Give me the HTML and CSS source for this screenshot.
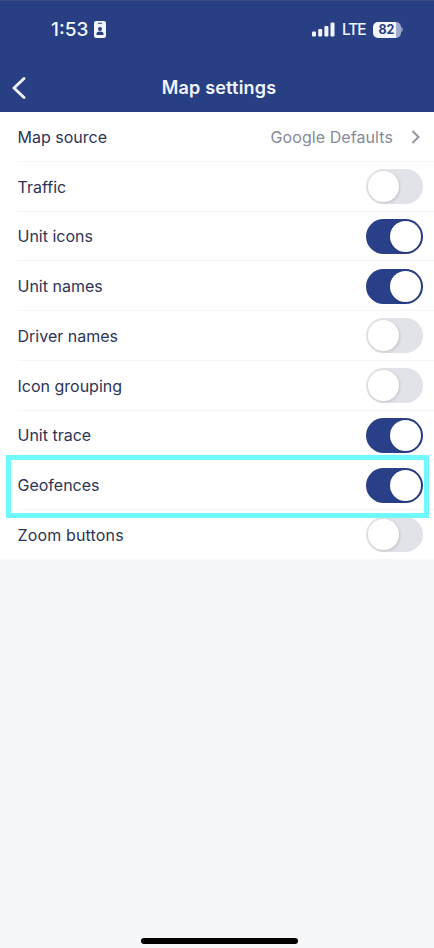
FILE: index.html
```
<!DOCTYPE html>
<html lang="en">
<head>
<meta charset="utf-8">
<title>Map settings</title>
<link rel="stylesheet" href="styles.css">
</head>
<body>
<div class="screen">
  <header class="header">
    <div class="status">
      <span class="time">1:53</span>
      <svg class="badge" width="12" height="17" viewBox="0 0 12 17"><rect width="12" height="17" rx="2.2" fill="#f2f5ff"/><rect x="3.8" y="1.8" width="4.4" height="1" rx=".5" fill="#293f83"/><circle cx="6" cy="8" r="2" fill="#293f83"/><path d="M2.5 14v-1.2c0-1.500 1.500-2.200 3.500-2.200s3.500.7 3.500 2.200V14z" fill="#293f83"/></svg>
      <svg class="signal" width="23" height="15" viewBox="0 0 23 15" fill="#f2f5ff"><rect x="0" y="9.500" width="4" height="5" rx="1"/><rect x="6.200" y="7" width="4" height="7.500" rx="1"/><rect x="12.400" y="4" width="4" height="10.500" rx="1"/><rect x="18.500" y="0.500" width="4" height="14" rx="1"/></svg>
      <span class="network">LTE</span>
      <span class="battery"><span class="level">82</span></span>
      <span class="tip"></span>
    </div>
    <div class="nav">
      <svg class="back" width="16" height="24" viewBox="0 0 16 24" fill="none" stroke="#f4f6ff" stroke-width="2.900" stroke-linecap="round" stroke-linejoin="round"><path d="M14 2.500 4 12 14 21.500"/></svg>
      <h1 class="title">Map settings</h1>
    </div>
  </header>
  <main class="list">
    <div class="row"><span class="label">Map source</span><span class="value">Google Defaults</span><svg class="chevron" width="10" height="14" viewBox="0 0 10 14" fill="none" stroke="#9296a3" stroke-width="2"><path d="m1.500 1 6 6-6 6"/></svg></div>
    <div class="row"><span class="label">Traffic</span><span class="toggle"></span></div>
    <div class="row"><span class="label">Unit icons</span><span class="toggle on"></span></div>
    <div class="row"><span class="label">Unit names</span><span class="toggle on"></span></div>
    <div class="row"><span class="label">Driver names</span><span class="toggle"></span></div>
    <div class="row"><span class="label">Icon grouping</span><span class="toggle"></span></div>
    <div class="row"><span class="label">Unit trace</span><span class="toggle on"></span></div>
    <div class="row marked"><span class="label">Geofences</span><span class="toggle on"></span></div>
    <div class="row"><span class="label zoom">Zoom buttons</span><span class="toggle"></span></div>
  </main>
  <div class="home"></div>
</div>
</body>
</html>
```
FILE: styles.css
```
*, *::before, *::after { box-sizing: border-box; }
body { margin: 0; font-family: Inter, "Liberation Sans", sans-serif; }
.screen { width: 434px; height: 948px; display: flex; flex-direction: column; background: #f6f7f9; overflow: hidden; }
.header { height: 112px; flex: none; background: #293f83; color: #f2f5ff; border-top: 1px solid #3a4a7c; }
.status { height: 57px; display: flex; align-items: center; padding-left: 51px; }
.time { width: 43px; font-size: 19px; font-weight: 500; }
.signal { margin-left: 206px; }
.network { width: 30px; margin-left: 7px; font-size: 15.500px; font-weight: 500; letter-spacing: -1.1px; }
.battery { width: 28px; height: 16px; margin-left: 1px; border-radius: 5px; background: linear-gradient(90deg, #f5f7ff 82%, #9faad0 82%); }
.level { display: block; padding-right: 1px; font-size: 12.500px; line-height: 16px; font-weight: 700; text-align: center; color: #293f83; }
.tip { width: 2px; height: 5px; margin-left: 0; border-radius: 0 2px 2px 0; background: #7f8dbb; }
.nav { height: 54px; padding: 5px 11px 0 10px; display: grid; grid-template-columns: 16px 1fr 16px; align-items: center; }
.title { margin: 0; font-size: 18px; line-height: 22px; font-weight: 600; letter-spacing: .2px; text-align: center; padding-left: 5px; }
.list { flex: none; height: 447px; background: #fff; }
.row { position: relative; height: 49.75px; display: flex; align-items: center; padding: 0 11px 0 17.500px; }
.row:not(:last-child)::after { content: ""; position: absolute; left: 18px; right: 0; bottom: 0; height: 1px; background: #f5f5f7; }
.label { font-size: 16px; line-height: 20px; color: #2c3556; }
.zoom { letter-spacing: .15px; }
.value { margin-left: auto; font-size: 16px; letter-spacing: .08px; color: #858a99; }
.chevron { margin: 0 2px 0 18px; }
.toggle { width: 57px; height: 35px; margin-left: auto; padding: 2px; display: flex; border-radius: 18px; background: #e2e3e8; }
.toggle::before { content: ""; width: 31px; height: 31px; border-radius: 50%; background: #fff; box-shadow: 1px 1px 3px rgba(0, 0, 0, .14); }
.toggle.on { background: #293f87; justify-content: flex-end; }
.marked::before { content: ""; position: absolute; z-index: 1; left: 6px; top: -5px; width: 423px; height: 63px; border: 5px solid #70f9ff; }
.home { width: 157px; height: 6px; margin: auto 0 4px 141px; border-radius: 3px; background: #000; }
```
